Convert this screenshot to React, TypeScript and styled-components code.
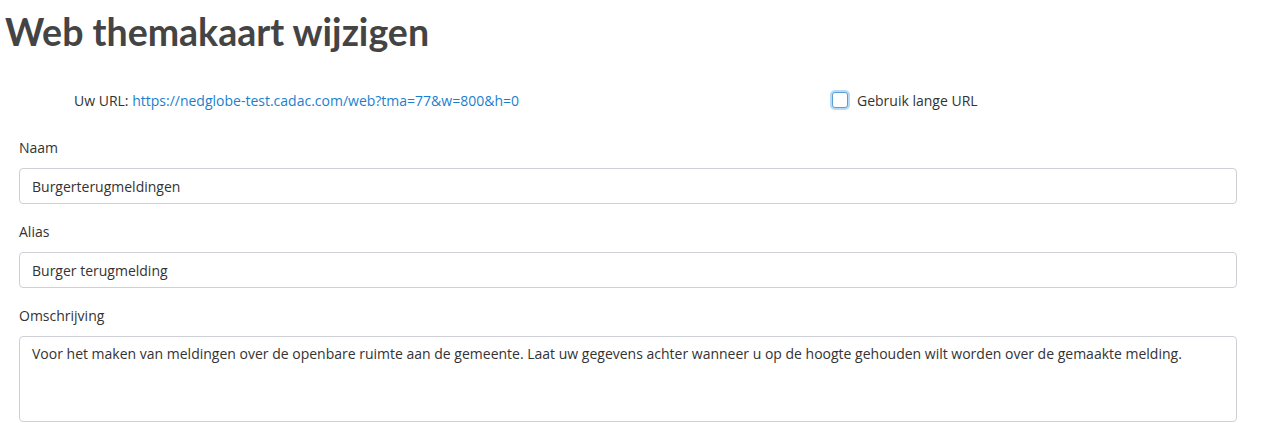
import React, { useState } from "react";
import styled, { createGlobalStyle } from "styled-components";

const GlobalStyle = createGlobalStyle`
  body {
    margin: 0;
    background: #fff;
    font-family: "Open Sans", "Liberation Sans", sans-serif;
    color: #333;
  }
`;

const Page = styled.div`
  padding: 0 32px 0 19px;
`;

const Title = styled.h1`
  margin: 0 0 0 -14px;
  padding-top: 10px;
  font-family: "Lato", "DejaVu Sans", sans-serif;
  font-weight: 700;
  font-size: 37.5px;
  line-height: 44px;
  color: #444;
`;

const UrlRow = styled.div`
  display: grid;
  grid-template-columns: 2fr 1fr;
  align-items: center;
  margin: 30px 0 22px;
  height: 32px;
  font-size: 14px;
`;

const UrlText = styled.div`
  padding-left: 55px;
`;

const UrlLink = styled.a`
  color: #1a7fcf;
  text-decoration: none;
`;

const CheckLabel = styled.label`
  display: flex;
  align-items: center;
  gap: 9px;
  padding-left: 1px;
`;

const Box = styled.span`
  width: 14px;
  height: 14px;
  border: 1px solid #5b9fd8;
  border-radius: 3px;
  box-shadow: 0 0 0 2px #b8daf5;
  background: #fff;
`;

const Field = styled.div`
  display: flex;
  flex-direction: column;
  margin-top: 18px;
`;

const Label = styled.label`
  font-size: 14px;
  line-height: 20px;
  margin-bottom: 10px;
`;

const Input = styled.input`
  height: 36px;
  box-sizing: border-box;
  border: 1px solid #cfd0d6;
  border-radius: 4px;
  padding: 0 12px;
  font-family: inherit;
  font-size: 14px;
  color: #333;
  outline: none;
`;

const TextArea = styled.textarea`
  height: 86px;
  box-sizing: border-box;
  border: 1px solid #cfd0d6;
  border-radius: 4px;
  padding: 7px 12px;
  font-family: inherit;
  font-size: 14px;
  line-height: 20px;
  color: #333;
  resize: none;
  outline: none;
`;

export default function App() {
  const [naam, setNaam] = useState("Burgerterugmeldingen");
  const [alias, setAlias] = useState("Burger terugmelding");
  const [omschrijving, setOmschrijving] = useState(
    "Voor het maken van meldingen over de openbare ruimte aan de gemeente. Laat uw gegevens achter wanneer u op de hoogte gehouden wilt worden over de gemaakte melding."
  );
  const url = "https://nedglobe-test.cadac.com/web?tma=77&w=800&h=0";

  return (
    <>
      <GlobalStyle />
      <Page>
        <Title>Web themakaart wijzigen</Title>
        <UrlRow>
          <UrlText>
            Uw URL: <UrlLink href="#">{url}</UrlLink>
          </UrlText>
          <CheckLabel>
            <Box />
            Gebruik lange URL
          </CheckLabel>
        </UrlRow>
        <Field>
          <Label>Naam</Label>
          <Input value={naam} onChange={(e) => setNaam(e.target.value)} />
        </Field>
        <Field>
          <Label>Alias</Label>
          <Input value={alias} onChange={(e) => setAlias(e.target.value)} />
        </Field>
        <Field>
          <Label>Omschrijving</Label>
          <TextArea
            value={omschrijving}
            onChange={(e) => setOmschrijving(e.target.value)}
          />
        </Field>
      </Page>
    </>
  );
}
